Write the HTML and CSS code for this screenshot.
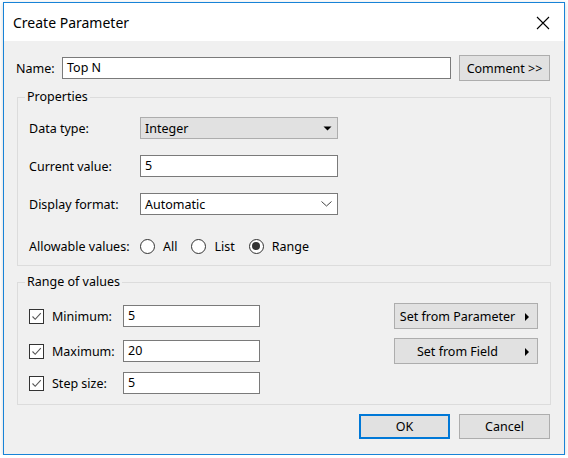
FILE: index.html
```html
<!DOCTYPE html>
<html>
<head>
<meta charset="utf-8">
<title>Create Parameter</title>
<link rel="stylesheet" href="styles.css">
</head>
<body>
<div class="window">
  <div class="titlebar">
    <span class="title">Create Parameter</span>
    <svg class="close" width="14" height="14" viewBox="0 0 14 14"><path d="M1 1L13 13M13 1L1 13" stroke="#000" stroke-width="1.1" fill="none"/></svg>
  </div>
  <div class="body">
    <div class="name-row">
      <span class="name-label">Name:</span>
      <div class="field name-field">Top N</div>
      <div class="btn comment-btn">Comment &gt;&gt;</div>
    </div>

    <fieldset class="group props">
      <legend>Properties</legend>
      <div class="prop-row first">
        <span class="prop-label">Data type:</span>
        <div class="combo combo-ro">
          <span>Integer</span>
          <svg width="9" height="5" viewBox="0 0 9 5"><path d="M0.5 0.5H8.5L4.5 4.5Z" fill="#000"/></svg>
        </div>
      </div>
      <div class="prop-row">
        <span class="prop-label">Current value:</span>
        <div class="field prop-field">5</div>
      </div>
      <div class="prop-row">
        <span class="prop-label">Display format:</span>
        <div class="combo combo-edit">
          <span>Automatic</span>
          <svg width="11" height="6" viewBox="0 0 11 6"><path d="M0.5 0.5L5.5 5L10.5 0.5" stroke="#444" stroke-width="1" fill="none"/></svg>
        </div>
      </div>
      <div class="prop-row radios">
        <span class="prop-label">Allowable values:</span>
        <span class="radio"></span><span class="radio-text">All</span>
        <span class="radio"></span><span class="radio-text">List</span>
        <span class="radio checked"></span><span class="radio-text">Range</span>
      </div>
    </fieldset>

    <fieldset class="group range">
      <legend>Range of values</legend>
      <div class="range-body">
        <div class="range-left">
          <div class="range-row r1">
            <span class="check"><svg width="13" height="13" viewBox="0 0 13 13"><path d="M2.5 6.5L5.2 9.3L10.8 3.2" stroke="#555" stroke-width="1.1" fill="none"/></svg></span>
            <span class="range-label">Minimum:</span>
            <div class="field range-field">5</div>
          </div>
          <div class="range-row r2">
            <span class="check"><svg width="13" height="13" viewBox="0 0 13 13"><path d="M2.5 6.5L5.2 9.3L10.8 3.2" stroke="#555" stroke-width="1.1" fill="none"/></svg></span>
            <span class="range-label">Maximum:</span>
            <div class="field range-field">20</div>
          </div>
          <div class="range-row r3">
            <span class="check"><svg width="13" height="13" viewBox="0 0 13 13"><path d="M2.5 6.5L5.2 9.3L10.8 3.2" stroke="#555" stroke-width="1.1" fill="none"/></svg></span>
            <span class="range-label">Step size:</span>
            <div class="field range-field">5</div>
          </div>
        </div>
        <div class="range-right">
          <div class="btn set-btn">
            <span class="set-text">Set from Parameter</span>
            <svg class="set-arrow" width="4" height="8" viewBox="0 0 4 8"><path d="M0 0L4 4L0 8Z" fill="#000"/></svg>
          </div>
          <div class="btn set-btn second">
            <span class="set-text">Set from Field</span>
            <svg class="set-arrow" width="4" height="8" viewBox="0 0 4 8"><path d="M0 0L4 4L0 8Z" fill="#000"/></svg>
          </div>
        </div>
      </div>
    </fieldset>

    <div class="footer">
      <div class="btn ok-btn">OK</div>
      <div class="btn cancel-btn">Cancel</div>
    </div>
  </div>
</div>
</body>
</html>
```

FILE: styles.css
```css
* { box-sizing: border-box; }

html, body {
  margin: 0;
  padding: 0;
  background: #ffffff;
}

body {
  font-family: "Noto Sans", "Open Sans", "DejaVu Sans", sans-serif;
  font-size: 12.5px;
  color: #000;
  padding: 2px 0 0 3px;
}

.window {
  width: 562px;
  height: 453px;
  border: 1px solid #1883d7;
  display: flex;
  flex-direction: column;
  box-shadow: 0 1px 4px rgba(0, 0, 0, 0.18);
}

.titlebar {
  height: 38px;
  flex: none;
  background: #fff;
  display: flex;
  align-items: center;
  justify-content: space-between;
  padding: 0 14px 0 9px;
}

.title {
  font-size: 14px;
  line-height: 20px;
  margin-top: 1px;
}

.close {
  display: block;
  margin-top: 1px;
}

.body {
  flex: 1;
  background: #f0f0f0;
  padding: 14px 0 0 0;
  display: flex;
  flex-direction: column;
}

/* Name row */
.name-row {
  display: flex;
  align-items: center;
  height: 26px;
  padding-left: 12px;
}

.name-label {
  width: 46px;
}

.field {
  background: #fff;
  border: 1px solid #7a7a7a;
  height: 22px;
  line-height: 20px;
  padding: 0 4px;
}

.name-field {
  width: 389px;
}

.btn {
  background: #e1e1e1;
  border: 1px solid #adadad;
  display: flex;
  align-items: center;
  justify-content: center;
}

.comment-btn {
  width: 91px;
  height: 26px;
  margin-left: 8px;
}

/* Group boxes */
.group {
  margin: 0 0 0 13px;
  width: 534px;
  border: 1px solid #dcdcdc;
  padding: 0 12px 0 11px;
}

.group legend {
  padding: 0 2px;
  margin-left: -4px;
  line-height: 16px;
}

.props {
  margin-top: 8px;
  padding-bottom: 8px;
}

.prop-row {
  display: flex;
  align-items: center;
  height: 22px;
  margin-top: 16px;
}

.prop-row.first {
  margin-top: 12px;
}

.prop-row.radios {
  margin-top: 20px;
}

.prop-label {
  width: 111px;
  flex: none;
}

.prop-field {
  width: 198px;
}

.combo {
  width: 198px;
  height: 22px;
  display: flex;
  align-items: center;
  justify-content: space-between;
  padding: 0 5px 0 4px;
}

.combo svg {
  display: block;
}

.combo-ro {
  background: #e1e1e1;
  border: 1px solid #adadad;
}

.combo-edit {
  background: #fff;
  border: 1px solid #7a7a7a;
}

.radio {
  width: 15px;
  height: 15px;
  border: 1px solid #333;
  border-radius: 50%;
  background: #fff;
  flex: none;
  display: flex;
  align-items: center;
  justify-content: center;
}

.radio.checked::after {
  content: "";
  width: 8px;
  height: 8px;
  border-radius: 50%;
  background: #333;
}

.radio-text {
  margin-left: 8px;
  margin-right: 14px;
}

/* Range group */
.range {
  margin-top: 8px;
  padding-bottom: 10px;
}

.range-body {
  display: flex;
  justify-content: space-between;
  padding-top: 13px;
}

.range-left {
  padding-top: 2px;
}

.range-row {
  display: flex;
  align-items: center;
  height: 22px;
}

.range-row.r2 { margin-top: 13px; }
.range-row.r3 { margin-top: 10px; }

.check {
  width: 15px;
  height: 15px;
  border: 1px solid #333;
  background: #fff;
  display: flex;
  align-items: center;
  justify-content: center;
  flex: none;
}

.check svg { display: block; }

.range-label {
  margin-left: 8px;
  width: 71px;
}

.range-field {
  width: 137px;
}

.range-right {
  display: flex;
  flex-direction: column;
}

.set-btn {
  width: 144px;
  height: 26px;
  position: relative;
  padding-right: 17px;
}

.set-btn.second {
  margin-top: 9px;
}

.set-arrow {
  position: absolute;
  right: 8px;
  top: 9px;
}

/* Footer */
.footer {
  display: flex;
  justify-content: flex-end;
  padding-right: 14px;
  margin-top: 9px;
}

.ok-btn,
.cancel-btn {
  width: 91px;
  height: 25px;
}

.ok-btn {
  border: 2px solid #0078d7;
  margin-right: 9px;
}
```
